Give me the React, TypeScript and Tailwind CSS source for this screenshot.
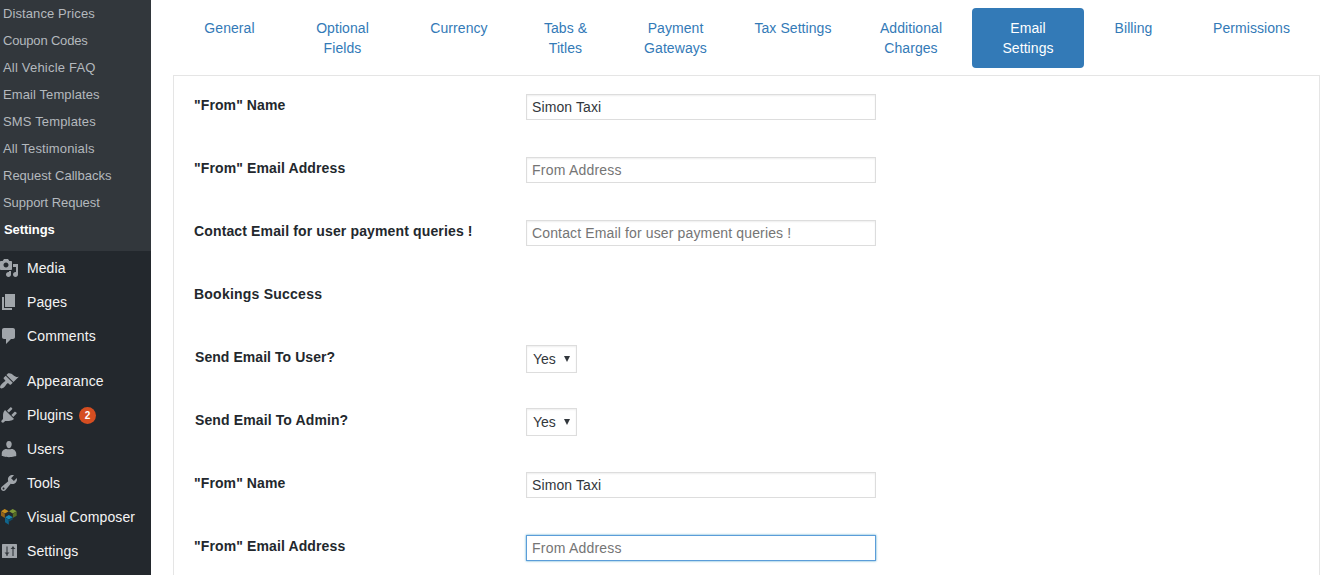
import React from "react";

const submenu = [
  { text: "Distance Prices", track: "tracking-[0.1px]" },
  { text: "Coupon Codes", track: "tracking-[-0.18px]" },
  { text: "All Vehicle FAQ", track: "tracking-[0.2px]" },
  { text: "Email Templates", track: "tracking-[0.1px]" },
  { text: "SMS Templates", track: "tracking-[0.16px]" },
  { text: "All Testimonials", track: "tracking-[0.14px]" },
  { text: "Request Callbacks", track: "tracking-normal" },
  { text: "Support Request", track: "tracking-[-0.05px]" },
];

const icons = {
  media:
    "M13 11V4c0-.55-.45-1-1-1h-1.67L9 1H5L3.67 3H2c-.55 0-1 .45-1 1v7c0 .55.45 1 1 1h10c.55 0 1-.45 1-1zM7 4.5c1.38 0 2.5 1.12 2.5 2.5S8.38 9.5 7 9.5 4.5 8.38 4.5 7 5.62 4.5 7 4.5zM14 6h5v10.5c0 1.38-1.12 2.5-2.5 2.5S14 17.88 14 16.5s1.12-2.5 2.5-2.5c.17 0 .34.02.5.05V9h-3V6zm-4 8.05V13h2v3.5c0 1.38-1.12 2.5-2.5 2.5S7 17.88 7 16.5 8.12 14 9.5 14c.17 0 .34.02.5.05z",
  pages: "M6 15V2h10v13H6zm-1 1h8v2H3V5h2v11z",
  comments:
    "M5 2h9c1.1 0 2 .9 2 2v7c0 1.1-.9 2-2 2h-2l-5 5v-5H5c-1.1 0-2-.9-2-2V4c0-1.1.9-2 2-2z",
  appearance:
    "M14.48 11.06L7.41 3.99l1.5-1.5c.5-.56 2.3-.47 3.51.32 1.21.8 1.43 1.28 2.91 2.1 1.18.64 2.45 1.26 4.45.85zm-.71.71L6.7 4.7 4.93 6.47c-.39.39-.39 1.02 0 1.41l1.06 1.06c.39.39.39 1.03 0 1.42-.6.6-1.43 1.11-2.21 1.69-.35.26-.7.53-1.01.84C1.43 14.23.4 16.08 1.4 17.07c.99 1 2.84-.03 4.18-1.36.31-.31.58-.66.85-1.02.57-.78 1.08-1.61 1.69-2.21.39-.39 1.02-.39 1.41 0l1.06 1.06c.39.39 1.02.39 1.41 0z",
  plugins:
    "M13.11 4.36L9.87 7.6 8 5.73l3.24-3.24c.35-.34 1.05-.2 1.56.32.52.51.66 1.21.31 1.55zm-8 1.77l.91-1.12 9.01 9.01-1.19.84c-.71.71-2.63 1.16-3.82 1.16H6.14L4.9 17.26c-.59.59-1.54.59-2.12 0-.59-.58-.59-1.53 0-2.12l1.24-1.24v-3.88c0-1.13.4-3.19 1.09-3.89zm7.26 3.97l3.24-3.24c.34-.35 1.04-.21 1.55.31.52.51.66 1.21.31 1.55l-3.24 3.25z",
  users:
    "M10 9.25c-2.27 0-2.73-3.44-2.73-3.44C7 4.02 7.82 2 9.97 2c2.16 0 2.98 2.02 2.71 3.81 0 0-.41 3.44-2.68 3.44zm0 1.1c1.2 0 1.9-.35 2.72-.35 2.39 0 4.52 2.33 4.52 4.53v2.49s-3.65 1.13-7.24 1.13c-3.65 0-7.24-1.13-7.24-1.13v-2.49c0-2.25 1.94-4.48 4.47-4.48.8 0 1.57.3 2.77.3z",
  tools:
    "M16.68 9.77c-1.34 1.34-3.3 1.67-4.95.99l-5.41 6.52c-.99.99-2.59.99-3.58 0s-.99-2.59 0-3.57l6.52-5.42c-.68-1.65-.35-3.61.99-4.95 1.28-1.28 3.12-1.62 4.72-1.06l-2.89 2.89 2.82 2.82 2.86-2.87c.53 1.58.18 3.39-1.08 4.65zM3.81 16.21c.4.39 1.04.39 1.43 0 .4-.4.4-1.04 0-1.43-.39-.4-1.03-.4-1.43 0-.39.39-.39 1.03 0 1.43z",
};

function MenuIcon({ d }: { d: string }) {
  return (
    <svg viewBox="0 0 20 20" className="-ml-px h-5 w-5 shrink-0 fill-[#a0a5aa]">
      <path d={d} />
    </svg>
  );
}

function SlidersIcon() {
  return (
    <svg viewBox="0 0 20 20" className="-ml-px h-5 w-5 shrink-0">
      <rect x="3" y="3" width="15" height="14" rx="0.600" fill="#a0a5aa" />
      <path d="M8 5.500V15M14 5.500V15" stroke="#32373c" strokeWidth="1.100" />
      <path d="M5.500 11.500h5L8 14zM11.500 8h5L14 5.500z" fill="#32373c" />
    </svg>
  );
}

function ComposerIcon() {
  return (
    <svg viewBox="0 0 20 20" className="-ml-px h-5 w-5 shrink-0">
      <path d="M2 4.200 5.700 2l4 2.200-3.800 2.200z" fill="#c88f1d" />
      <path d="M2 4.600 5.800 6.800V11L2 8.800z" fill="#94641a" />
      <path d="M10 4.200 13.700 2l4 2.200-3.900 2.200z" fill="#7f9a38" />
      <path d="M13.900 6.800l3.800-2.200v4.200L13.900 11z" fill="#566d26" />
      <path d="M6 10.200l3.800-2.200 4 2.200-4 2.200z" fill="#1788b5" />
      <path d="M6 10.600l3.800 2.200v5L6 15.200z" fill="#10658c" />
      <path d="M9.800 12.800l3.800-2.200v2l-3.800 2.200z" fill="#124e68" />
    </svg>
  );
}

function MenuItem({
  icon,
  track = "tracking-[0.08px]",
  children,
}: {
  icon: React.ReactNode;
  track?: string;
  children: React.ReactNode;
}) {
  return (
    <li className="flex h-[34px] items-center">
      {icon}
      <span className={`ml-2 text-sm leading-[18px] text-[#f4f4f4] ${track}`}>{children}</span>
    </li>
  );
}

function Sidebar() {
  return (
    <aside className="h-full w-[151px] shrink-0 bg-[#23282d]">
      <ul className="h-[251px] bg-[#32373c] pl-[3px] text-[13px] leading-[27px] text-[#b4b9be]">
        {submenu.map((s) => (
          <li key={s.text} className={s.track}>
            {s.text}
          </li>
        ))}
        <li className="pl-px font-bold tracking-[-0.08px] text-white">Settings</li>
      </ul>
      <ul>
        <MenuItem icon={<MenuIcon d={icons.media} />}>Media</MenuItem>
        <MenuItem icon={<MenuIcon d={icons.pages} />}>Pages</MenuItem>
        <MenuItem icon={<MenuIcon d={icons.comments} />} track="tracking-[0.14px]">
          Comments
        </MenuItem>
        <li className="h-[11px]" />
        <MenuItem icon={<MenuIcon d={icons.appearance} />} track="tracking-[0.12px]">
          Appearance
        </MenuItem>
        <li className="flex h-[34px] items-center">
          <MenuIcon d={icons.plugins} />
          <span className="ml-2 text-sm leading-[18px] text-[#f4f4f4]">Plugins</span>
          <span className="ml-1.5 flex h-[17px] w-[17px] items-center justify-center rounded-full bg-[#d54e21] text-[10px] leading-[17px] font-bold text-white">
            2
          </span>
        </li>
        <MenuItem icon={<MenuIcon d={icons.users} />}>Users</MenuItem>
        <MenuItem icon={<MenuIcon d={icons.tools} />}>Tools</MenuItem>
        <MenuItem icon={<ComposerIcon />} track="tracking-[0.12px]">
          Visual Composer
        </MenuItem>
        <MenuItem icon={<SlidersIcon />} track="tracking-[0.1px]">
          Settings
        </MenuItem>
      </ul>
    </aside>
  );
}

const tabs = [
  { lines: ["General"], width: "w-[107px]" },
  { lines: ["Optional", "Fields"], width: "w-[119px]" },
  { lines: ["Currency"], width: "w-[114px]" },
  { lines: ["Tabs &", "Titles"], width: "w-[99px]" },
  { lines: ["Payment", "Gateways"], width: "w-[121px]" },
  { lines: ["Tax Settings"], width: "w-[114px]" },
  { lines: ["Additional", "Charges"], width: "w-[122px]" },
  { lines: ["Email", "Settings"], width: "w-[112px]", active: true },
  { lines: ["Billing"], width: "w-[99px]" },
  { lines: ["Permissions"], width: "w-[137px]" },
];

function Tabs() {
  return (
    <nav className="flex h-[60px] pl-[3px] text-center text-sm leading-5 tracking-[0.07px]">
      {tabs.map((t) => (
        <a
          key={t.lines[0]}
          className={`${t.width} shrink-0 rounded py-2.5 ${t.active ? "bg-[#337ab7] text-white" : "text-[#337ab7]"}`}
        >
          {t.lines.map((l) => (
            <span key={l} className="block">
              {l}
            </span>
          ))}
        </a>
      ))}
    </nav>
  );
}

function TextField({
  value,
  placeholder,
  active,
  track = "tracking-[0.1px]",
}: {
  value?: string;
  placeholder?: string;
  active?: boolean;
  track?: string;
}) {
  return (
    <input
      type="text"
      defaultValue={value}
      placeholder={placeholder}
      className={`h-[26px] w-[350px] border px-[5px] text-sm text-[#32373c] outline-none placeholder:text-[#757575] ${track} ${
        active
          ? "border-[#5b9dd9] shadow-[0_0_2px_rgba(30,140,190,0.8)]"
          : "border-[#ddd] shadow-[inset_0_1px_2px_rgba(0,0,0,0.07)]"
      }`}
    />
  );
}

function YesSelect() {
  return (
    <button className="-mt-px flex h-7 w-[51px] items-center border border-[#ddd] pl-1.5 text-sm text-[#32373c] shadow-[inset_0_1px_2px_rgba(0,0,0,0.07)]">
      Yes
      <svg viewBox="0 0 6 6" className="ml-2 h-1.5 w-1.5 fill-[#32373c]">
        <path d="M0 0h6L3 6z" />
      </svg>
    </button>
  );
}

function Row({ label, track, children }: { label: string; track: string; children?: React.ReactNode }) {
  return (
    <div className="flex h-[63px] items-start">
      <label className={`w-[332px] shrink-0 text-sm leading-[22px] font-bold text-[#23282d] ${track}`}>{label}</label>
      {children}
    </div>
  );
}

export default function App() {
  return (
    <div className="flex h-[575px] w-[1338px] overflow-hidden bg-white font-['Liberation_Sans',Arial,sans-serif]">
      <Sidebar />
      <main className="ml-[22px] w-[1147px] shrink-0 pt-2">
        <Tabs />
        <section className="mt-[7px] h-[560px] border border-[#e5e5e5] pt-[18px] pl-5">
          <Row label={'"From" Name'} track="tracking-[0.1px]">
            <TextField value="Simon Taxi" />
          </Row>
          <Row label={'"From" Email Address'} track="tracking-[0.12px]">
            <TextField placeholder="From Address" track="tracking-[0.22px]" />
          </Row>
          <Row label="Contact Email for user payment queries !" track="tracking-[0.14px]">
            <TextField placeholder="Contact Email for user payment queries !" track="tracking-[0.14px]" />
          </Row>
          <Row label="Bookings Success" track="tracking-[0.23px]" />
          <Row label="Send Email To User?" track="pl-px tracking-[0.06px]">
            <YesSelect />
          </Row>
          <Row label="Send Email To Admin?" track="pl-px tracking-[0.12px]">
            <YesSelect />
          </Row>
          <Row label={'"From" Name'} track="tracking-[0.1px]">
            <TextField value="Simon Taxi" />
          </Row>
          <Row label={'"From" Email Address'} track="tracking-[0.12px]">
            <TextField placeholder="From Address" active track="tracking-[0.22px]" />
          </Row>
        </section>
      </main>
    </div>
  );
}
